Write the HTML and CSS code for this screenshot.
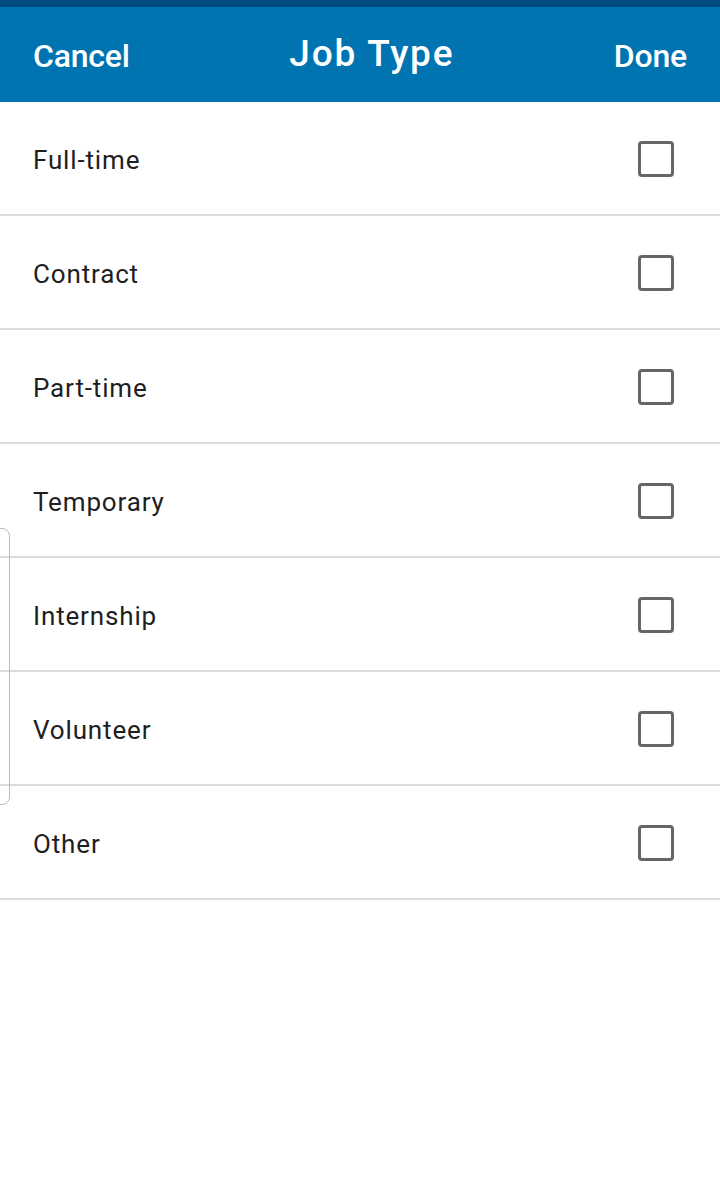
FILE: index.html
```html
<!DOCTYPE html>
<html>
<head>
<meta charset="utf-8">
<link rel="stylesheet" href="styles.css">
</head>
<body>
<div class="status"></div>
<header class="bar">
  <span class="btn">Cancel</span>
  <span class="title">Job Type</span>
  <span class="btn">Done</span>
</header>
<ul class="list">
  <li class="row"><span class="label">Full-time</span><span class="box"></span></li>
  <li class="row"><span class="label">Contract</span><span class="box"></span></li>
  <li class="row"><span class="label">Part-time</span><span class="box"></span></li>
  <li class="row"><span class="label">Temporary</span><span class="box"></span></li>
  <li class="row"><span class="label">Internship</span><span class="box"></span></li>
  <li class="row"><span class="label">Volunteer</span><span class="box"></span></li>
  <li class="row"><span class="label">Other</span><span class="box"></span></li>
</ul>
<div class="edge"></div>
</body>
</html>
```
FILE: styles.css
```css
html, body { margin: 0; padding: 0; background: #fff; }
body { font-family: Roboto, "Noto Sans", sans-serif; width: 720px; height: 1200px; position: relative; overflow: hidden; }
.status { height: 7px; background: #004b7d; }
.bar {
  height: 95px; background: #0073b1; color: #fff;
  display: flex; align-items: center; justify-content: space-between;
  padding: 0 33px; box-sizing: border-box;
}
.btn { font-size: 32px; font-weight: 500; letter-spacing: -0.2px; padding-top: 2px; }
.title { font-size: 37px; font-weight: 500; letter-spacing: 1.8px; margin-top: -2px; }
.list { list-style: none; margin: 0; padding: 0; }
.row {
  height: 112px; border-bottom: 2px solid #dcdcdc;
  display: flex; align-items: center; justify-content: space-between;
  padding: 0 46px 0 33px; font-size: 26px; color: #1f1f1f;
}
.label { letter-spacing: 0.85px; padding-top: 3px; }
.box {
  width: 30px; height: 30px; border: 3px solid #666; border-radius: 4px;
  margin-top: 1px;
}
.edge {
  position: absolute; left: -20px; top: 528px; width: 28px; height: 275px;
  border: 1px solid #bbb; border-radius: 8px;
}
```
